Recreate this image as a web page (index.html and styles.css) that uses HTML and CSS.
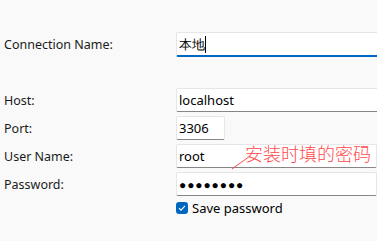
FILE: index.html
```html
<!DOCTYPE html>
<html lang="en">
<head>
  <meta charset="UTF-8" />
  <title>Connection</title>
  <link rel="stylesheet" href="styles.css">
</head>
<body>
  <div class="form">
    <div class="row name-row">
      <label class="label">Connection Name:</label>
      <div class="field wide focused">本地<span class="caret"></span></div>
    </div>

    <div class="row">
      <label class="label">Host:</label>
      <div class="field wide">localhost</div>
    </div>
    <div class="row">
      <label class="label">Port:</label>
      <div class="field port">3306</div>
    </div>
    <div class="row">
      <label class="label">User Name:</label>
      <div class="field">root</div>
    </div>
    <div class="row">
      <label class="label">Password:</label>
      <div class="field dots">●●●●●●●●</div>
    </div>
    <div class="row check-row">
      <span class="label"></span>
      <label class="check">
        <span class="box">
          <svg width="12" height="12" viewBox="0 0 12 12"><path d="M3 6.2 L5 8.2 L9 3.8" fill="none" stroke="#fff" stroke-width="1.1"/></svg>
        </span>
        Save password
      </label>
    </div>
  </div>

  <!-- annotation over the form -->
  <div class="note">安装时填的密码</div>
  <svg class="note-line" width="40" height="30" viewBox="0 0 40 30">
    <line x1="2" y1="27" x2="20" y2="14" stroke="#ff4a4a" stroke-width="1"/>
  </svg>
</body>
</html>
```

FILE: styles.css
```css
body {
  margin: 0;
  background: #f9f9f9;
  font-family: "Noto Sans", "Open Sans", sans-serif;
  font-size: 12.5px;
  color: #1b1b1b;
  overflow: hidden;
}
.form {
  padding-top: 32px;
  display: flex;
  flex-direction: column;
  gap: 4px;
}
.row {
  display: flex;
  align-items: center;
  height: 24px;
}
.name-row {
  height: 25px;
  margin-bottom: 27px;
}
.label {
  width: 172px;
  padding-left: 4px;
  flex: none;
}
.field {
  box-sizing: border-box;
  height: 24px;
  width: 201px;
  flex: none;
  background: #fff;
  border: 1px solid #e6e6e6;
  border-bottom-color: #868686;
  border-radius: 2px;
  padding-left: 2px;
  display: flex;
  align-items: center;
  font-size: 13px;
  color: #000;
}
.field.wide {
  width: 201px;
  border-right: none;
  border-radius: 2px 0 0 2px;
}
.field.focused {
  height: 25px;
  border-bottom: 2px solid #0067c0;
}
.caret {
  display: inline-block;
  width: 1px;
  height: 17px;
  background: #000;
}
.field.port {
  width: 49px;
}
.field.dots {
  font-size: 12px;
  letter-spacing: 0.9px;
}
.check-row {
  height: 16px;
}
.check {
  display: flex;
  align-items: center;
  gap: 4px;
  font-size: 13px;
  color: #000;
}
.box {
  width: 12px;
  height: 12px;
  border-radius: 3px;
  background: #0067c0;
  display: flex;
}
.note {
  position: absolute;
  left: 245px;
  top: 141px;
  font-family: "Noto Sans CJK SC", sans-serif;
  font-weight: 300;
  font-size: 18px;
  line-height: 24px;
  color: #ff4a4a;
}
.note-line {
  position: absolute;
  left: 230px;
  top: 142px;
}
```
